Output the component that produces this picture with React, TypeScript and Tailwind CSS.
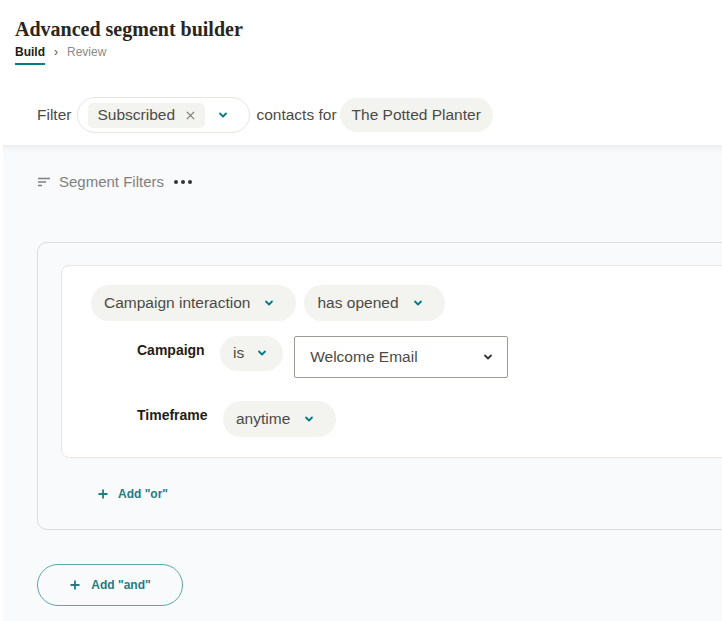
const sans = "font-['Liberation_Sans',Arial,sans-serif]";

function Chevron({ className = "" }: { className?: string }) {
  return (
    <svg viewBox="0 0 12 12" className={`h-3 w-3 ${className}`} fill="none">
      <path
        d="M3 4.5 6 7.5 9 4.5"
        stroke="currentColor"
        strokeWidth="1.8"
        strokeLinecap="round"
        strokeLinejoin="round"
      />
    </svg>
  );
}

function Chip({ label, className = "" }: { label: string; className?: string }) {
  return (
    <div
      className={`flex h-9 items-center gap-[13px] rounded-full bg-[#f3f3f0] pl-[13px] pr-[21px] text-[15.5px] text-[#4d4a46] ${className}`}
    >
      <span>{label}</span>
      <Chevron className="text-[#007c89]" />
    </div>
  );
}

function Plus() {
  return (
    <svg viewBox="0 0 12 12" className="h-3 w-3" fill="none">
      <path d="M6 1.5v9M1.5 6h9" stroke="currentColor" strokeWidth="1.8" />
    </svg>
  );
}

export default function App() {
  return (
    <div className={`h-[621px] w-[722px] overflow-hidden bg-white ${sans}`}>
      {/* header */}
      <div className="px-[15px] pt-[17px]">
        <h1 className="font-['Liberation_Serif',Georgia,serif] text-[20px] font-bold leading-6 text-[#2b2520]">
          Advanced segment builder
        </h1>
        <div className="mt-[2px] flex items-center gap-[9px] text-[12px]">
          <span className="border-b-2 border-[#007c89] pb-[2px] font-bold text-[#241c15]">
            Build
          </span>
          <span className="-mt-[4px] text-[#555]">›</span>
          <span className="-mt-[4px] text-[#8a8a8a]">Review</span>
        </div>
      </div>

      <div className="mt-[32px] flex items-center pl-[37px] text-[15.5px] text-[#4d4a46]">
        <span>Filter</span>
        <div className="ml-[6px] flex h-9 w-[173px] items-center rounded-full border border-[#e6e5df] pl-[10px]">
          <div className="flex h-[25px] items-center gap-[10px] rounded-[5px] bg-[#f3f3f0] px-[9px]">
            <span>Subscribed</span>
            <svg viewBox="0 0 12 12" className="h-[11px] w-[11px]" fill="none">
              <path d="M2 2l8 8M10 2l-8 8" stroke="#7a7a7a" strokeWidth="1.3" />
            </svg>
          </div>
          <Chevron className="ml-[12px] text-[#007c89]" />
        </div>
        <span className="ml-[6px]">contacts for</span>
        <div className="ml-[3px] flex h-[34px] items-center rounded-full bg-[#f3f3f0] px-3">
          The Potted Planter
        </div>
      </div>

      {/* body */}
      <div className="ml-[3px] mt-[12px] h-[480px] bg-[#f9fafc] shadow-[inset_0_6px_6px_-4px_rgba(0,0,0,0.07)]">
        <div className="flex items-center pl-[34px] pt-[26px] text-[15px] text-[#7f7f7f]">
          <svg viewBox="0 0 14 12" className="h-3 w-[14px]" fill="none">
            <path d="M1 2.5h12M1 6h8M1 9.5h4" stroke="#7f7f7f" strokeWidth="1.4" />
          </svg>
          <span className="ml-[8px]">Segment Filters</span>
          <span className="ml-[10px] flex gap-[3px]">
            <span className="h-[4px] w-[4px] rounded-full bg-[#333]" />
            <span className="h-[4px] w-[4px] rounded-full bg-[#333]" />
            <span className="h-[4px] w-[4px] rounded-full bg-[#333]" />
          </span>
        </div>

        <div className="ml-[34px] mr-[-40px] mt-[48px] h-[288px] rounded-[10px] border border-[#dcdcdc] pl-[23px] pt-[22px]">
          <div className="h-[193px] rounded-[8px] border border-[#e6e6e6] bg-white pl-[29px] pt-[19px]">
            <div className="flex gap-2">
              <Chip label="Campaign interaction" />
              <Chip label="has opened" />
            </div>
            <div className="mt-[15px] flex items-start pl-[46px]">
              <span className="mt-[4px] w-[83px] text-[14px] font-bold text-[#241c15]">
                Campaign
              </span>
              <Chip label="is" className="h-[35px] !gap-[12px] !pr-[15px]" />
              <div className="ml-[11px] flex h-[42px] w-[214px] items-center justify-between rounded-[2px] border border-[#9e9b96] pl-[15px] pr-[13px] text-[15.5px] text-[#4d4a46]">
                <span>Welcome Email</span>
                <Chevron className="text-[#333]" />
              </div>
            </div>
            <div className="mt-[23px] flex items-start pl-[46px]">
              <span className="mt-[4px] w-[86px] text-[14px] font-bold text-[#241c15]">
                Timeframe
              </span>
              <Chip label="anytime" />
            </div>
          </div>
          <button className="ml-[36px] mt-[27px] flex items-center gap-[9px] text-[12px] font-bold text-[#1f7b84]">
            <Plus />
            Add "or"
          </button>
        </div>

        <button className="ml-[34px] mt-[34px] flex h-[42px] w-[146px] items-center justify-center gap-[10px] rounded-full border border-[#5aa9b1] text-[12px] font-bold text-[#1f7b84]">
          <Plus />
          Add "and"
        </button>
      </div>
    </div>
  );
}
